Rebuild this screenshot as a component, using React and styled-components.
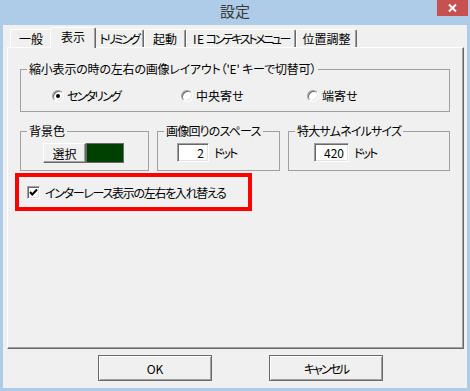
import React from 'react';
import styled, { createGlobalStyle } from 'styled-components';

const Global = createGlobalStyle`
  html, body { margin: 0; padding: 0; }
  body {
    width: 470px; height: 391px; overflow: hidden;
    font-family: "Noto Sans CJK JP", "Noto Sans", sans-serif;
    font-size: 12px; color: #000;
    font-feature-settings: "palt";
  }
`;

const Window = styled.div`
  width: 470px; height: 391px; box-sizing: border-box;
  background: #aecbe7;
  display: flex; flex-direction: column;
`;

const TitleBar = styled.div`
  height: 25px; flex: none;
  display: grid; grid-template-columns: 1fr auto 1fr;
`;

const Title = styled.div`
  grid-column: 2;
  font-size: 15px; line-height: 22px; color: #3a3a3a;
  font-feature-settings: normal;
`;

const CloseButton = styled.div`
  grid-column: 3; justify-self: end; align-self: start;
  width: 31px; height: 16px; margin-right: 2px;
  background: #c75050;
  display: flex; align-items: center; justify-content: center;
`;

const Client = styled.div`
  flex: 1; margin: 0 3px 3px;
  background: #f0f0f0;
  display: flex; flex-direction: column;
  padding: 2px 3px 0 4px;
`;

const TabStrip = styled.div`
  height: 20px; display: flex; align-items: flex-end;
  padding-left: 3px;
`;

const Tab = styled.div`
  box-sizing: border-box; flex: none;
  width: ${p => p.$w + (p.$active ? 4 : 0)}px;
  height: ${p => (p.$active ? 21 : 18)}px;
  margin: 0 ${p => (p.$active ? -2 : 0)}px ${p => (p.$active ? -1 : 0)}px;
  padding-bottom: ${p => (p.$active ? 3 : 0)}px;
  position: relative; z-index: ${p => (p.$active ? 2 : 1)};
  background: #f0f0f0;
  border-top: 1px solid #fff; border-left: 1px solid #fff; border-right: 1px solid #696969;
  box-shadow: inset -1px 0 0 #a0a0a0;
  border-radius: 2px 2px 0 0;
  display: flex; align-items: center; justify-content: center;
  white-space: nowrap; letter-spacing: ${p => p.$ls || 0}px;
`;

const Latin = styled.span`
  letter-spacing: 0.5px; margin-right: 1px;
`;

const Panel = styled.div`
  box-sizing: border-box; height: 302px;
  border: 1px solid; border-color: #fff #696969 #696969 #fff;
  box-shadow: inset -1px -1px 0 #a0a0a0;
  padding: 14px 0 0 7px;
  display: flex; flex-direction: column; align-items: flex-start;
`;

const GroupBox = styled.div`
  box-sizing: border-box; width: ${p => p.$w}px;
  margin: 7px 0 0 ${p => p.$ml || 0}px;
  border: 1px solid #a0a0a0;
  display: flex; flex-direction: column; align-items: flex-start;
  padding-bottom: ${p => p.$pb}px;
`;

const GroupTitle = styled.div`
  margin: -8px 0 0 6px; padding: 0 2px;
  height: 14px; line-height: 14px; white-space: nowrap;
  background: #f0f0f0;
  letter-spacing: ${p => p.$ls || 0}px;
`;

const GroupBody = styled.div`
  display: flex; align-items: center;
  margin-top: ${p => p.$mt}px; padding-left: ${p => p.$pl}px;
`;

const RadioRow = styled.div`
  display: grid; grid-template-columns: 129px 126px auto;
  height: 14px; align-items: center;
`;

const RadioItem = styled.label`
  display: flex; align-items: center; gap: 3px; white-space: nowrap;
  letter-spacing: ${p => p.$ls || 0}px;
`;

const RadioCircle = styled.span`
  width: 12px; height: 12px; box-sizing: border-box; border-radius: 50%;
  border: 1px solid; border-color: #a0a0a0 #fff #fff #a0a0a0;
  box-shadow: inset 1px 1px 0 #696969, inset -1px -1px 0 #e3e3e3;
  background: #fff;
  display: flex; align-items: center; justify-content: center;
  &::after {
    content: ''; width: 4px; height: 4px; border-radius: 50%;
    background: ${p => (p.$on ? '#000' : 'transparent')};
  }
`;

const Row = styled.div`
  display: flex; gap: 8px; margin: 12px 0 0 5px;
`;

const RaisedButton = styled.div`
  box-sizing: border-box; width: 43px; height: 20px;
  border: 1px solid; border-color: #fff #696969 #696969 #fff;
  box-shadow: inset -1px -1px 0 #a0a0a0;
  display: flex; align-items: center; justify-content: center;
`;

const Swatch = styled.div`
  box-sizing: border-box; width: 38px; height: 20px;
  border: 1px solid #6a6a6a;
  background: ${p => p.$color};
`;

const NumBox = styled.div`
  box-sizing: border-box; width: ${p => p.$w}px; height: 19px;
  border: 1px solid; border-color: #a0a0a0 #fff #fff #a0a0a0;
  box-shadow: inset 1px 1px 0 #696969, inset -1px -1px 0 #e3e3e3;
  background: #fff; text-align: right; padding-right: 4px;
  line-height: 17px;
`;

const Unit = styled.span`
  margin-left: 5px; white-space: nowrap; letter-spacing: -2px;
`;

const Highlight = styled.div`
  box-sizing: border-box; width: 237px; height: 38px;
  margin-top: 2px;
  border: 4px solid #ff0000;
  display: flex; align-items: center; gap: 5px;
  padding-left: 8px; white-space: nowrap;
  letter-spacing: -1.3px;
`;

const CheckBox = styled.span`
  width: 13px; height: 13px; box-sizing: border-box; flex: none;
  border: 1px solid; border-color: #a0a0a0 #fff #fff #a0a0a0;
  box-shadow: inset 1px 1px 0 #696969, inset -1px -1px 0 #e3e3e3;
  background: #fff;
  display: flex; align-items: center; justify-content: center;
`;

const ButtonRow = styled.div`
  display: flex; gap: 57px; margin-top: 6px; padding-left: 91px;
`;

const DialogButton = styled.div`
  box-sizing: border-box; width: 114px; height: 26px;
  background: #f0f0f0;
  border: 1px solid #6a6a6a;
  box-shadow: inset 1px 1px 0 #fff, inset -1px -1px 0 #a0a0a0;
  display: flex; align-items: center; justify-content: center;
  letter-spacing: ${p => p.$ls || 0}px;
`;

const tabs = [
  { key: 'general', label: '一般', w: 42 },
  { key: 'view', label: '表示', w: 42, active: true },
  { key: 'trim', label: 'トリミング', w: 50, ls: -2.2 },
  { key: 'boot', label: '起動', w: 42 },
  { key: 'ie', label: <><Latin>IE</Latin>コンテキストメニュー</>, w: 110, ls: -2.4 },
  { key: 'pos', label: '位置調整', w: 61 },
];

const radios = [
  { label: 'センタリング', on: true, ls: -1.8 },
  { label: '中央寄せ' },
  { label: '端寄せ' },
];

export default function App() {
  return (
    <>
      <Global />
      <Window>
        <TitleBar>
          <Title>設定</Title>
          <CloseButton>
            <svg width="9" height="8" viewBox="0 0 9 8">
              <path d="M1 0.5 L8 7.5 M8 0.5 L1 7.5" stroke="#fff" strokeWidth="2" />
            </svg>
          </CloseButton>
        </TitleBar>
        <Client>
          <TabStrip>
            {tabs.map(t => (
              <Tab key={t.key} $w={t.w} $active={t.active} $ls={t.ls}>{t.label}</Tab>
            ))}
          </TabStrip>
          <Panel>
            <GroupBox $w={430} $ml={5} $pb={10}>
              <GroupTitle $ls={-0.2}>縮小表示の時の左右の画像レイアウト（'E' キーで切替可）</GroupTitle>
              <GroupBody $mt={11} $pl={31}>
                <RadioRow>
                  {radios.map(r => (
                    <RadioItem key={r.label} $ls={r.ls}>
                      <RadioCircle $on={r.on} />
                      {r.label}
                    </RadioItem>
                  ))}
                </RadioRow>
              </GroupBody>
            </GroupBox>
            <Row>
              <GroupBox $w={129} $pb={7}>
                <GroupTitle>背景色</GroupTitle>
                <GroupBody $mt={5} $pl={22}>
                  <RaisedButton>選択</RaisedButton>
                  <Swatch $color="#004000" />
                </GroupBody>
              </GroupBox>
              <GroupBox $w={123} $pb={7}>
                <GroupTitle $ls={-0.8}>画像回りのスペース</GroupTitle>
                <GroupBody $mt={5} $pl={19}>
                  <NumBox $w={32}>2</NumBox>
                  <Unit>ドット</Unit>
                </GroupBody>
              </GroupBox>
              <GroupBox $w={162} $pb={7}>
                <GroupTitle $ls={-0.8}>特大サムネイルサイズ</GroupTitle>
                <GroupBody $mt={5} $pl={25}>
                  <NumBox $w={35}>420</NumBox>
                  <Unit>ドット</Unit>
                </GroupBody>
              </GroupBox>
            </Row>
            <Highlight>
              <CheckBox>
                <svg width="9" height="9" viewBox="0 0 9 9">
                  <path d="M1 4 L3.3 6.5 L8 1.5" stroke="#000" strokeWidth="2" fill="none" />
                </svg>
              </CheckBox>
              インターレース表示の左右を入れ替える
            </Highlight>
          </Panel>
          <ButtonRow>
            <DialogButton>OK</DialogButton>
            <DialogButton $ls={-2}>キャンセル</DialogButton>
          </ButtonRow>
        </Client>
      </Window>
    </>
  );
}
